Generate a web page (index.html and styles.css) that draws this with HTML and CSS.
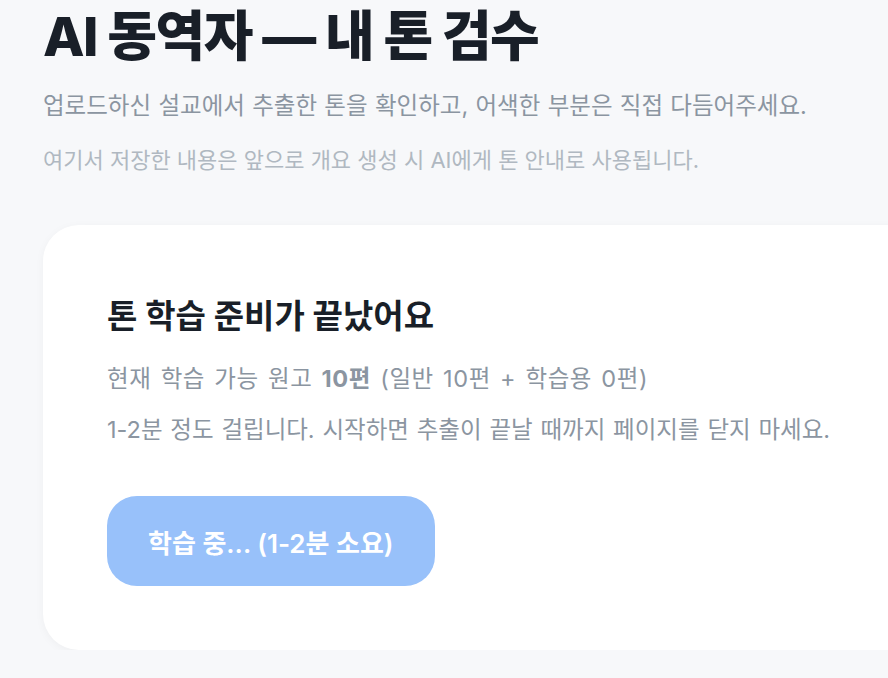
FILE: index.html
```html
<!DOCTYPE html>
<html lang="ko">
<head>
    <meta charset="UTF-8">
    <meta name="viewport" content="width=device-width, initial-scale=1.0">
    <title>AI 동역자 — 내 톤 검수</title>
    <link rel="stylesheet" href="styles.css">
</head>
<body>
    <main class="page">
        <header class="page-header">
            <h1>AI 동역자 — 내 톤 검수</h1>
            <p class="subtitle">업로드하신 설교에서 추출한 톤을 확인하고, 어색한 부분은 직접 다듬어주세요.</p>
            <p class="note">여기서 저장한 내용은 앞으로 개요 생성 시 AI에게 톤 안내로 사용됩니다.</p>
        </header>

        <section class="card">
            <h2>톤 학습 준비가 끝났어요</h2>
            <p class="card-text card-count">현재 학습 가능 원고 <strong>10편</strong> (일반 10편 + 학습용 0편)</p>
            <p class="card-text">1-2분 정도 걸립니다. 시작하면 추출이 끝날 때까지 페이지를 닫지 마세요.</p>
            <button class="btn-learn" disabled>학습 중... (1-2분 소요)</button>
        </section>
    </main>
</body>
</html>
```

FILE: styles.css
```css
* {
    margin: 0;
    padding: 0;
    box-sizing: border-box;
}

body {
    font-family: Inter, "Noto Sans CJK KR", sans-serif;
    background: #f7f8fa;
    color: #191f28;
    overflow: hidden;
}

.page {
    width: 1000px;
    padding: 7px 0 0 43px;
}

.page-header h1 {
    font-size: 54px;
    font-weight: 800;
    letter-spacing: -1.5px;
    line-height: 60px;
}

.subtitle {
    margin-top: 23px;
    font-size: 23.5px;
    line-height: 32px;
    word-spacing: 0.7px;
    color: #8b95a1;
}

.note {
    margin-top: 23px;
    font-size: 22px;
    line-height: 30px;
    color: #b0b8c1;
}

.card {
    margin-top: 50px;
    background: #fff;
    border-radius: 36px;
    padding: 69px 64px 64px;
    box-shadow: 0 2px 10px rgba(0, 0, 0, 0.04);
}

.card h2 {
    font-size: 33px;
    font-weight: 700;
    line-height: 44px;
    margin-bottom: 24px;
}

.card-text {
    font-size: 23.5px;
    line-height: 34px;
    word-spacing: 1.2px;
    color: #8b95a1;
    margin-bottom: 17px;
}

.card-count {
    letter-spacing: 0.6px;
    word-spacing: 2px;
}

.card-text strong {
    font-weight: 700;
    color: #8b95a1;
}

.btn-learn {
    margin-top: 32px;
    height: 90px;
    padding: 0 41px;
    border: none;
    border-radius: 30px;
    background: #98c1fa;
    color: #fff;
    font-family: inherit;
    font-size: 26px;
    font-weight: 600;
}
```
